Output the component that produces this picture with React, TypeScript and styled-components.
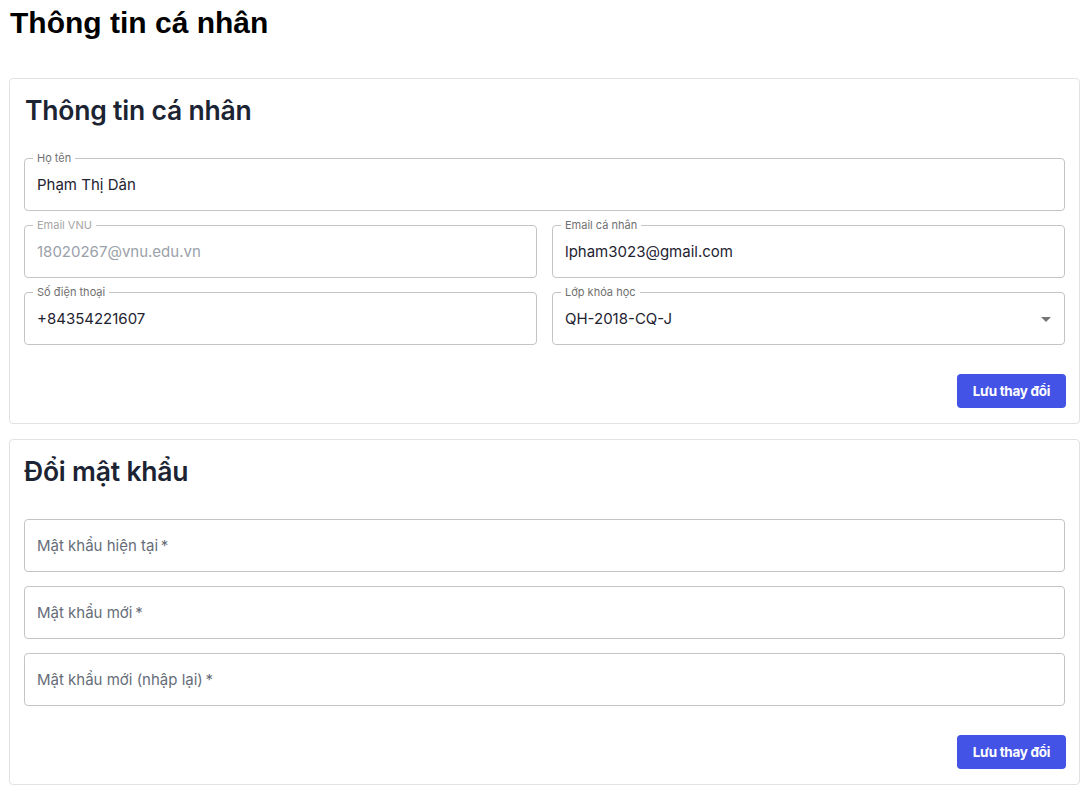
import React from "react";
import styled, { createGlobalStyle } from "styled-components";

const GlobalStyle = createGlobalStyle`
  html, body {
    margin: 0;
    padding: 0;
    background: #ffffff;
  }
  * {
    box-sizing: border-box;
  }
`;

const Page = styled.main`
  padding: 4px 11px 12px 9px;
  font-family: Inter, "Noto Sans", sans-serif;
`;

const PageTitle = styled.h1`
  margin: 0 0 37px 1px;
  font-family: "Liberation Sans", Arial, sans-serif;
  font-size: 30px;
  line-height: 37px;
  font-weight: 700;
  color: #000000;
`;

const Stack = styled.div`
  display: flex;
  flex-direction: column;
  gap: 15px;
`;

const Card = styled.section`
  border: 1px solid #e2e2e2;
  border-radius: 4px;
  padding: 14px 14px 15px 14px;
  background: #fff;
`;

const CardTitle = styled.h2<{ $indent?: number }>`
  margin: 0 0 26px ${({ $indent }) => $indent ?? 1}px;
  font-size: 26.5px;
  line-height: 34px;
  font-weight: 600;
  color: #1c2434;
  letter-spacing: -0.2px;
`;

const Form = styled.div`
  display: flex;
  flex-direction: column;
  gap: 9px;
`;

const Row = styled.div`
  display: grid;
  grid-template-columns: 1fr 1fr;
  gap: 15px;
`;

const Field = styled.fieldset`
  margin: 0;
  min-width: 0;
  padding: 0 6px 5px 12px;
  border: 1px solid #c4c4c4;
  border-radius: 4px;
`;

const Legend = styled.legend<{ $disabled?: boolean; $empty?: boolean }>`
  display: block;
  height: 11px;
  margin-left: -4px;
  padding: ${({ $empty }) => ($empty ? "0" : "0 4px")};
  font-size: 11px;
  line-height: 11px;
  color: ${({ $disabled }) => ($disabled ? "#a6a6a6" : "#707070")};
  white-space: nowrap;
`;

const Control = styled.div`
  display: flex;
  align-items: center;
  height: 41px;
  gap: 8px;
`;

const Value = styled.span<{ $tone?: "normal" | "disabled" | "hint" }>`
  flex: 1;
  font-size: 15px;
  color: ${({ $tone }) =>
    $tone === "disabled" ? "#9aa1a9" : $tone === "hint" ? "#666d78" : "#1e2330"};
  white-space: nowrap;
  overflow: hidden;
`;

const Arrow = styled.svg`
  width: 24px;
  height: 24px;
  flex-shrink: 0;
  fill: rgba(0, 0, 0, 0.54);
`;

const Actions = styled.div`
  display: flex;
  justify-content: flex-end;
  margin: 29px -1px 0 0;
`;

const SaveButton = styled.button`
  height: 34px;
  padding: 0 16px;
  border: none;
  border-radius: 4px;
  background: #4353e6;
  color: #ffffff;
  font-family: Inter, "Noto Sans", sans-serif;
  font-size: 13.5px;
  font-weight: 700;
  letter-spacing: -0.3px;
  cursor: pointer;
`;

type InputProps = {
  label?: string;
  value: string;
  tone?: "normal" | "disabled" | "hint";
  select?: boolean;
};

const OutlinedInput: React.FC<InputProps> = ({ label, value, tone, select }) => (
  <Field>
    {label ? (
      <Legend $disabled={tone === "disabled"}>{label}</Legend>
    ) : (
      <Legend $empty />
    )}
    <Control>
      <Value $tone={tone}>{value}</Value>
      {select && (
        <Arrow viewBox="0 0 24 24">
          <path d="M7 10l5 5 5-5z" />
        </Arrow>
      )}
    </Control>
  </Field>
);

const App: React.FC = () => {
  return (
    <Page>
      <GlobalStyle />
      <PageTitle>Thông tin cá nhân</PageTitle>
      <Stack>
        <Card>
          <CardTitle>Thông tin cá nhân</CardTitle>
          <Form>
            <OutlinedInput label="Họ tên" value="Phạm Thị Dân" />
            <Row>
              <OutlinedInput label="Email VNU" value="18020267@vnu.edu.vn" tone="disabled" />
              <OutlinedInput label="Email cá nhân" value="lpham3023@gmail.com" />
            </Row>
            <Row>
              <OutlinedInput label="Số điện thoại" value="+84354221607" />
              <OutlinedInput label="Lớp khóa học" value="QH-2018-CQ-J" select />
            </Row>
          </Form>
          <Actions>
            <SaveButton>Lưu thay đổi</SaveButton>
          </Actions>
        </Card>
        <Card>
          <CardTitle $indent={0}>Đổi mật khẩu</CardTitle>
          <Form>
            <OutlinedInput value={"Mật khẩu hiện tại\u2009*"} tone="hint" />
            <OutlinedInput value={"Mật khẩu mới\u2009*"} tone="hint" />
            <OutlinedInput value={"Mật khẩu mới (nhập lại)\u2009*"} tone="hint" />
          </Form>
          <Actions>
            <SaveButton>Lưu thay đổi</SaveButton>
          </Actions>
        </Card>
      </Stack>
    </Page>
  );
};

export default App;
